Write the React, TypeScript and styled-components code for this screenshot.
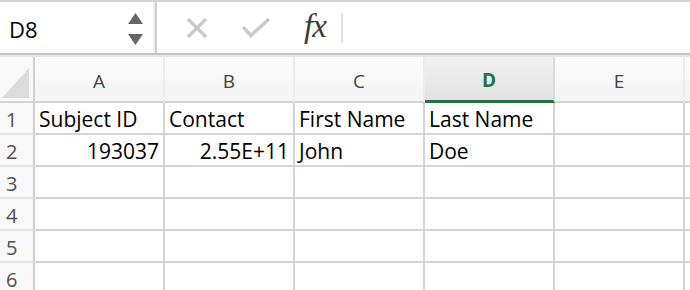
import { createGlobalStyle, styled } from 'styled-components';

const GlobalStyle = createGlobalStyle`
  html, body {
    margin: 0;
    padding: 0;
    background: #ffffff;
  }
  body {
    width: 690px;
    height: 290px;
    overflow: hidden;
    font-family: "Open Sans", "Noto Sans", sans-serif;
  }
`;

const Root = styled.div`
  width: 690px;
  height: 290px;
  display: flex;
  flex-direction: column;
  border-top: 2px solid #d2d2d2;
  box-sizing: border-box;
  overflow: hidden;
`;

const FormulaBar = styled.div`
  height: 51px;
  display: flex;
  flex-direction: row;
  align-items: stretch;
  border-bottom: 2px solid #c4c4c4;
  box-shadow: 0 2px 0 #e6e6e6;
  margin-bottom: 2px;
  flex-shrink: 0;
`;

const NameBox = styled.div`
  width: 155px;
  display: flex;
  align-items: center;
  justify-content: space-between;
  padding-left: 9px;
  padding-right: 10px;
  box-sizing: border-box;
  border-right: 2px solid #ececec;
`;

const NameText = styled.span`
  font-size: 22px;
  color: #000000;
  margin-top: 2px;
`;

const Stepper = styled.div`
  display: flex;
  flex-direction: column;
  row-gap: 10px;
  margin-top: 2px;
`;

const Divider = styled.div`
  width: 2px;
  background: #cfcfcf;
`;

const FormulaTools = styled.div`
  display: flex;
  align-items: center;
  padding-left: 29px;
  column-gap: 33px;
`;

const FxLabel = styled.span`
  font-family: "Liberation Serif", "DejaVu Serif", serif;
  font-style: italic;
  font-size: 33px;
  color: #3c3c3c;
  margin-left: 0;
  margin-top: -2px;
  letter-spacing: -1px;
`;

const ToolSeparator = styled.div`
  width: 2px;
  height: 30px;
  background: #e2e2e2;
  margin-left: -18px;
`;

const Sheet = styled.div`
  display: grid;
  grid-template-columns: 35px repeat(5, 130px) 1fr;
  grid-auto-rows: 32px;
  grid-template-rows: 46px;
`;

const Corner = styled.div`
  background: #f8f8f8;
  border-right: 2px solid #d0d0d0;
  border-bottom: 2px solid #d4d4d4;
  position: relative;
  box-sizing: border-box;
`;

const CornerTriangle = styled.div`
  position: absolute;
  right: 4px;
  bottom: 3px;
  width: 0;
  height: 0;
  border-left: 27px solid transparent;
  border-bottom: 30px solid #dcdcdc;
`;

const ColHeader = styled.div<{ $selected?: boolean }>`
  display: flex;
  align-items: center;
  justify-content: center;
  padding-top: 3px;
  box-sizing: border-box;
  font-size: 19px;
  font-weight: ${(p) => (p.$selected ? 700 : 400)};
  color: ${(p) => (p.$selected ? '#217346' : '#444444')};
  background: ${(p) =>
    p.$selected
      ? 'linear-gradient(#f1f1f1, #e2e2e2)'
      : 'linear-gradient(#fbfbfb, #f4f4f4)'};
  border-right: 2px solid ${(p) => (p.$selected ? '#dadada' : '#ececec')};
  border-bottom: ${(p) =>
    p.$selected ? '3px solid #217346' : '2px solid #d4d4d4'};
`;

const RowHeader = styled.div`
  display: flex;
  align-items: center;
  padding-left: 6px;
  padding-top: 2px;
  box-sizing: border-box;
  font-size: 20px;
  color: #505050;
  background: #f8f8f8;
  border-right: 2px solid #d0d0d0;
  border-bottom: 2px solid #e4e4e4;
`;

const Cell = styled.div<{ $align?: 'left' | 'right' }>`
  display: flex;
  align-items: center;
  justify-content: ${(p) => (p.$align === 'right' ? 'flex-end' : 'flex-start')};
  padding: 2px 4px 0 4px;
  box-sizing: border-box;
  font-size: 21px;
  color: #000000;
  white-space: nowrap;
  overflow: hidden;
  border-right: 2px solid #d4d4d4;
  border-bottom: 2px solid #d4d4d4;
`;

const columns = ['A', 'B', 'C', 'D', 'E'];

type CellValue = { text: string; align?: 'left' | 'right' };

const rows: CellValue[][] = [
  [
    { text: 'Subject ID' },
    { text: 'Contact' },
    { text: 'First Name' },
    { text: 'Last Name' },
    { text: '' },
  ],
  [
    { text: '193037', align: 'right' },
    { text: '2.55E+11', align: 'right' },
    { text: 'John' },
    { text: 'Doe' },
    { text: '' },
  ],
  [],
  [],
  [],
  [],
];

function CancelIcon() {
  return (
    <svg width="22" height="22" viewBox="0 0 22 22">
      <path
        d="M2 2 L20 20 M20 2 L2 20"
        stroke="#c9c9c9"
        strokeWidth="3.2"
        fill="none"
      />
    </svg>
  );
}

function ConfirmIcon() {
  return (
    <svg width="30" height="22" viewBox="0 0 30 22">
      <path
        d="M2 10 L10 18.5 L28 2"
        stroke="#c9c9c9"
        strokeWidth="3.4"
        fill="none"
      />
    </svg>
  );
}

function StepArrow({ up }: { up?: boolean }) {
  return (
    <svg width="15" height="11" viewBox="0 0 15 11">
      <path
        d={up ? 'M7.5 0 L15 11 L0 11 Z' : 'M0 0 L15 0 L7.5 11 Z'}
        fill="#666666"
      />
    </svg>
  );
}

export default function App() {
  return (
    <Root>
      <GlobalStyle />
      <FormulaBar>
        <NameBox>
          <NameText>D8</NameText>
          <Stepper>
            <StepArrow up />
            <StepArrow />
          </Stepper>
        </NameBox>
        <Divider />
        <FormulaTools>
          <CancelIcon />
          <ConfirmIcon />
          <FxLabel>fx</FxLabel>
          <ToolSeparator />
        </FormulaTools>
      </FormulaBar>
      <Sheet>
        <Corner>
          <CornerTriangle />
        </Corner>
        {columns.map((c) => (
          <ColHeader key={c} $selected={c === 'D'}>
            {c}
          </ColHeader>
        ))}
        <ColHeader />
        {rows.map((row, i) => (
          <>
            <RowHeader key={`h${i}`}>{i + 1}</RowHeader>
            {columns.map((c, j) => (
              <Cell key={`${i}-${c}`} $align={row[j]?.align}>
                {row[j]?.text ?? ''}
              </Cell>
            ))}
            <Cell key={`${i}-x`} />
          </>
        ))}
      </Sheet>
    </Root>
  );
}
